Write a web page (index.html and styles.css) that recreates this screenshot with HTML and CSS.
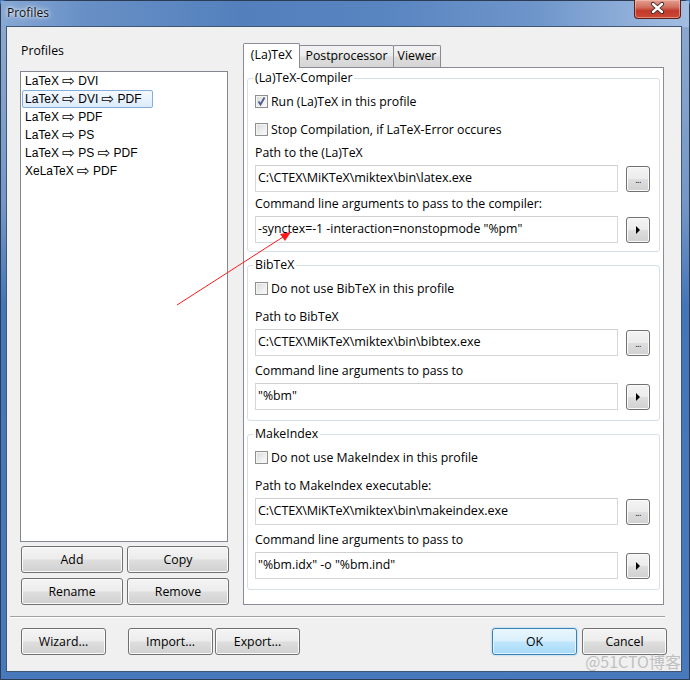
FILE: index.html
```html
<!DOCTYPE html>
<html>
<head>
<meta charset="utf-8">
<title>Profiles</title>
<link rel="stylesheet" href="styles.css">
</head>
<body>
<div class="window">
  <div class="titlebar">
    <span class="title">Profiles</span>
    <div class="close">
      <svg width="47" height="19" viewBox="0 0 47 19">
        <path d="M19 5 L28 13 M28 5 L19 13" stroke="#3a2020" stroke-width="4.2" stroke-linecap="round"/>
        <path d="M19 5 L28 13 M28 5 L19 13" stroke="#fff" stroke-width="2.4" stroke-linecap="round"/>
      </svg>
    </div>
  </div>
  <div class="client">
    <div class="main">
      <div class="left">
        <div class="profiles-label">Profiles</div>
        <ul class="listbox">
          <li class="item">LaTeX <span class="arr">⇨</span> DVI</li>
          <li class="item sel">LaTeX <span class="arr">⇨</span> DVI <span class="arr">⇨</span> PDF</li>
          <li class="item">LaTeX <span class="arr">⇨</span> PDF</li>
          <li class="item">LaTeX <span class="arr">⇨</span> PS</li>
          <li class="item">LaTeX <span class="arr">⇨</span> PS <span class="arr">⇨</span> PDF</li>
          <li class="item">XeLaTeX <span class="arr">⇨</span> PDF</li>
        </ul>
        <div class="btn-grid">
          <div class="btn">Add</div>
          <div class="btn">Copy</div>
          <div class="btn">Rename</div>
          <div class="btn">Remove</div>
        </div>
      </div>
      <div class="tabs">
        <div class="tabstrip">
          <div class="tab active">(La)TeX</div>
          <div class="tab post">Postprocessor</div>
          <div class="tab viewer">Viewer</div>
        </div>
        <div class="pane">
          <fieldset class="group compact">
            <legend>(La)TeX-Compiler</legend>
            <div class="cb cb-m"><span class="box checked"><svg width="11" height="11" viewBox="0 0 11 11"><path d="M2.5 5.5 L4.5 8.5 L8.5 1.5" fill="none" stroke="#4b5d8f" stroke-width="1.8"/></svg></span><span>Run (La)TeX in this profile</span></div>
            <div class="cb cb-s"><span class="box"></span><span>Stop Compilation, if LaTeX-Error occures</span></div>
            <div class="lbl">Path to the (La)TeX</div>
            <div class="field"><div class="input path">C:\CTEX\MiKTeX\miktex\bin\latex.exe</div><div class="ib">...</div></div>
            <div class="lbl lbl2">Command line arguments to pass to the compiler:</div>
            <div class="field"><div class="input">-synctex=-1 -interaction=nonstopmode "%pm"</div><div class="ib"><span class="tri"></span></div></div>
          </fieldset>
          <fieldset class="group">
            <legend>BibTeX</legend>
            <div class="cb cb-l"><span class="box"></span><span>Do not use BibTeX in this profile</span></div>
            <div class="lbl">Path to BibTeX</div>
            <div class="field"><div class="input path">C:\CTEX\MiKTeX\miktex\bin\bibtex.exe</div><div class="ib">...</div></div>
            <div class="lbl lbl2">Command line arguments to pass to</div>
            <div class="field"><div class="input">"%bm"</div><div class="ib"><span class="tri"></span></div></div>
          </fieldset>
          <fieldset class="group">
            <legend>MakeIndex</legend>
            <div class="cb cb-l"><span class="box"></span><span>Do not use MakeIndex in this profile</span></div>
            <div class="lbl">Path to MakeIndex executable:</div>
            <div class="field"><div class="input path">C:\CTEX\MiKTeX\miktex\bin\makeindex.exe</div><div class="ib">...</div></div>
            <div class="lbl lbl2">Command line arguments to pass to</div>
            <div class="field"><div class="input">"%bm.idx" -o "%bm.ind"</div><div class="ib"><span class="tri"></span></div></div>
          </fieldset>
        </div>
      </div>
    </div>
    <div class="sep"></div>
    <div class="footer">
      <div class="btn fbtn">Wizard...</div>
      <div class="btn fbtn import">Import...</div>
      <div class="btn fbtn export">Export...</div>
      <div class="btn fbtn default ok">OK</div>
      <div class="btn fbtn cancel">Cancel</div>
    </div>
  </div>
  <svg class="annot" width="690" height="680" viewBox="0 0 690 680">
    <line x1="177" y1="305" x2="283" y2="237" stroke="#ff1a1a" stroke-width="1"/>
    <polygon points="291,232 285,241 280,234" fill="#ff1a1a"/>
  </svg>
  <div class="watermark">@51CTO博客</div>
</div>
</body>
</html>
```

FILE: styles.css
```css
* { box-sizing: border-box; }
html, body { margin: 0; padding: 0; }
body {
  width: 690px;
  height: 680px;
  overflow: hidden;
  font-family: "Open Sans", "Noto Sans", sans-serif;
  font-size: 12.3px;
  color: #000;
  background: #4a7bbd;
}
.window {
  position: relative;
  width: 690px;
  height: 680px;
  display: flex;
  flex-direction: column;
  border: 1px solid #2c3c54;
  border-radius: 6px 6px 0 0;
  padding: 0 8px 8px 6px;
  background:
    linear-gradient(180deg, rgba(255,255,255,0.15) 0%, rgba(255,255,255,0) 45%),
    linear-gradient(180deg, #7b9bc7 0%, #6d91c3 30%, #4475b8 45%, #4879bd 100%);
}
.titlebar {
  height: 26px;
  flex: 0 0 26px;
  display: flex;
  align-items: flex-start;
  margin: 0 -8px 0 -6px;
  padding: 0 8px 0 6px;
  background: linear-gradient(90deg, #87a8d4 0%, #6890c6 12%, #5380bc 35%, #5884c0 55%, #6f96cb 78%, #a3bee1 100%);
}
.title {
  padding-top: 4px;
  line-height: 16px;
  font-size: 12px;
  color: #111;
  text-shadow: 0 0 6px #fff, 0 0 3px #fff;
}
.close {
  margin-left: auto;
  margin-top: -1px;
  width: 47px;
  height: 19px;
  border: 1px solid #5b2119;
  border-top: none;
  border-radius: 0 0 4px 4px;
  background: linear-gradient(180deg, #e3a091 0%, #d0705e 40%, #c1392a 60%, #cc4a36 100%);
  box-shadow: inset 0 0 0 1px rgba(255,200,190,0.5);
}
.close svg { display: block; margin: -1px 0 0 -1px; }
.client {
  flex: 0 0 644px;
  height: 644px;
  background: #f0f0f0;
  box-shadow: 0 0 0 1px #3f5775;
  display: flex;
  flex-direction: column;
}
.main {
  display: flex;
  gap: 15px;
  padding: 16px 17px 0 13px;
}
.left {
  width: 208px;
  display: flex;
  flex-direction: column;
}
.profiles-label {
  height: 16px;
  line-height: 16px;
  margin: 0 0 12px 1px;
}
.listbox {
  list-style: none;
  margin: 0;
  padding: 0;
  height: 471px;
  background: #fff;
  border: 1px solid #828790;
  font-family: "Liberation Sans", "DejaVu Sans", sans-serif;
  font-size: 12px;
}
.item {
  width: fit-content;
  height: 18px;
  line-height: 16px;
  margin-left: 1px;
  padding: 0 10px 0 2px;
  border: 1px solid transparent;
  white-space: nowrap;
}
.arr {
  font-family: "DejaVu Sans", sans-serif;
  font-size: 15px;
  line-height: 10px;
  vertical-align: -1px;
}
.item.sel {
  border-color: #84acdd;
  border-radius: 2px;
  background: linear-gradient(180deg, #f5f9fe 0%, #dcebfc 100%);
}
.btn-grid {
  display: grid;
  grid-template-columns: 102px 102px;
  gap: 5px 4px;
  margin: 4px 0 0 1px;
}
.btn {
  height: 27px;
  display: flex;
  align-items: center;
  justify-content: center;
  border: 1px solid #707070;
  border-radius: 3px;
  background: linear-gradient(180deg, #f4f4f4 0%, #ececec 48%, #dedede 52%, #d0d0d0 100%);
  box-shadow: inset 0 0 0 1px #fbfbfb;
}
.tabs {
  width: 421px;
  display: flex;
  flex-direction: column;
}
.tabstrip {
  height: 24px;
  display: flex;
  align-items: flex-end;
  position: relative;
  z-index: 1;
}
.tab {
  height: 22px;
  line-height: 20px;
  text-align: center;
  border: 1px solid #898c95;
  border-bottom: none;
  border-radius: 2px 2px 0 0;
  background: linear-gradient(180deg, #f3f3f3 0%, #ebebeb 48%, #dddddd 52%, #d6d6d6 100%);
  white-space: nowrap;
}
.tab.active {
  width: 57px;
  height: 25px;
  margin-bottom: -1px;
  padding-top: 1px;
  background: #fff;
  position: relative;
  z-index: 2;
}
.tab.post { width: 95px; margin-left: -1px; }
.tab.viewer { width: 48px; margin-left: -1px; }
.pane {
  height: 538px;
  border: 1px solid #898c95;
  background: #fff;
  padding: 2px 3px 0 3px;
}
.group {
  margin: 0 0 5px 0;
  min-width: 0;
  border: 1px solid #d5dfe5;
  border-radius: 3px;
  padding: 5px 9px 10px 7px;
}
.group.compact { padding-bottom: 8px; }
.group legend {
  padding: 0 2px;
  margin-left: -2px;
  line-height: 16px;
}
.cb {
  height: 20px;
  display: flex;
  align-items: center;
  gap: 3px;
}
.cb-m { margin-bottom: 8px; }
.cb-s { margin-bottom: 5px; }
.cb-l { margin-bottom: 10px; }
.box {
  width: 13px;
  height: 13px;
  flex: 0 0 13px;
  border: 1px solid #8e8f8f;
  background: linear-gradient(135deg, #d8d8d8 0%, #efefef 60%, #fafafa 100%);
  box-shadow: inset 0 0 0 1px #f4f4f4;
  display: flex;
  align-items: center;
  justify-content: center;
}
.box svg { display: block; }
.lbl {
  height: 18px;
  line-height: 18px;
  white-space: nowrap;
}
.lbl2 { margin-top: 6px; }
.compact .lbl2 { margin-top: 3px; }
.field {
  display: flex;
  align-items: center;
  gap: 8px;
  margin-top: 3px;
  height: 27px;
}
.input {
  flex: 1;
  height: 27px;
  line-height: 24px;
  padding: 0 2px;
  background: #fff;
  border: 1px solid #d7d7d7;
  border-top-color: #cfcfcf;
  white-space: nowrap;
  overflow: hidden;
}
.input.path { font-size: 12.6px; letter-spacing: -0.1px; }
.ib {
  width: 24px;
  height: 26px;
  flex: 0 0 24px;
  display: flex;
  align-items: center;
  justify-content: center;
  border: 1px solid #707070;
  border-radius: 3px;
  background: linear-gradient(180deg, #f4f4f4 0%, #ececec 48%, #dedede 52%, #d0d0d0 100%);
  box-shadow: inset 0 0 0 1px #fbfbfb;
  font-size: 9px;
  line-height: 10px;
  letter-spacing: -0.5px;
  padding-top: 2px;
  color: #000;
}
.tri {
  width: 0;
  height: 0;
  border-top: 4px solid transparent;
  border-bottom: 4px solid transparent;
  border-left: 4px solid #000;
  margin-top: -2px;
}
.sep {
  margin: 11px 16px 0 3px;
  height: 2px;
  border-top: 1px solid #a0a0a0;
  border-bottom: 1px solid #ffffff;
}
.footer {
  display: flex;
  padding: 0 14px;
  margin-top: 10px;
}
.fbtn { width: 85px; }
.import { margin-left: 22px; }
.export { margin-left: 2px; }
.ok { margin-left: auto; }
.cancel { margin-left: 5px; }
.btn.default {
  border-color: #3c7fb1;
  background: linear-gradient(180deg, #eaf6fd 0%, #d9f0fc 48%, #bee6fd 52%, #a7d9f5 100%);
  box-shadow: inset 0 0 0 1px #e6f5fd, 0 0 2px #6fc2f0;
}
.annot {
  position: absolute;
  left: -1px;
  top: -1px;
  pointer-events: none;
}
.watermark {
  position: absolute;
  right: 8px;
  bottom: 6px;
  font-family: "Noto Sans CJK SC", "Noto Sans", sans-serif;
  font-size: 16px;
  color: rgba(175, 175, 175, 0.75);
  pointer-events: none;
}
```
